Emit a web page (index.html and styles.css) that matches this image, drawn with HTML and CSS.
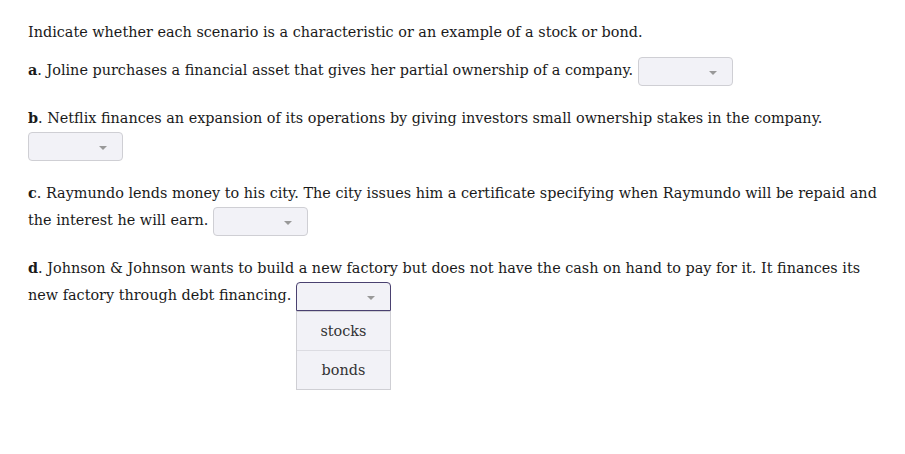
FILE: index.html
```html
<!DOCTYPE html>
<html lang="en">
<head>
  <meta charset="UTF-8" />
  <title>Stocks and bonds</title>
  <link rel="stylesheet" href="styles.css">
</head>
<body>
  <div class="pergunta">
    <p class="intro">Indicate whether each scenario is a characteristic or an example of a stock or bond.</p>

    <p class="item"><b>a</b>. Joline purchases a financial asset that gives her partial ownership of a company.
      <span class="dropdown"><span class="seta"></span></span>
    </p>

    <p class="item"><b>b</b>. Netflix finances an expansion of its operations by giving investors small ownership stakes in the company.
      <span class="dropdown"><span class="seta"></span></span>
    </p>

    <p class="item"><b>c</b>. Raymundo lends money to his city. The city issues him a certificate specifying when Raymundo will be repaid and the interest he will earn.
      <span class="dropdown"><span class="seta"></span></span>
    </p>

    <p class="item"><b>d</b>. Johnson &amp; Johnson wants to build a new factory but does not have the cash on hand to pay for it. It finances its new factory through debt financing.
      <span class="dropdown aberto"><span class="seta"></span>
        <span class="opcoes">
          <span class="opcao">stocks</span>
          <span class="opcao">bonds</span>
        </span>
      </span>
    </p>
  </div>
</body>
</html>
```

FILE: styles.css
```css
html, body {
  min-height: 454px;
}

body {
  margin: 0;
  background-color: #fff;
  color: #1a1a1a;
  font-family: "DejaVu Serif", "Liberation Serif", serif;
  font-size: 14.4px;
}

.pergunta {
  width: 860px;
  padding: 19px 0 120px 28px;
}

p {
  margin: 0;
  line-height: 27px;
}

.intro {
  margin-bottom: 10px;
}

.item {
  margin-bottom: 20px;
}

.dropdown {
  display: inline-block;
  position: relative;
  width: 93px;
  height: 27px;
  margin: -2px 0;
  vertical-align: middle;
  background-color: #f2f2f7;
  border: 1px solid #cfcfd4;
  border-radius: 4px;
}

.seta {
  position: absolute;
  right: 15px;
  top: 13px;
  border-left: 4px solid transparent;
  border-right: 4px solid transparent;
  border-top: 4px solid #999;
}

.aberto {
  border-color: #4a4170;
  border-radius: 4px 4px 0 0;
}

.opcoes {
  position: absolute;
  left: -1px;
  top: 28px;
  width: 93px;
  background-color: #f2f2f7;
  border: 1px solid #cfcfd4;
  z-index: 2;
}

.opcao {
  display: block;
  height: 38px;
  line-height: 38px;
  text-align: center;
  color: #333;
}

.opcao + .opcao {
  border-top: 1px solid #dcdce2;
}
```
